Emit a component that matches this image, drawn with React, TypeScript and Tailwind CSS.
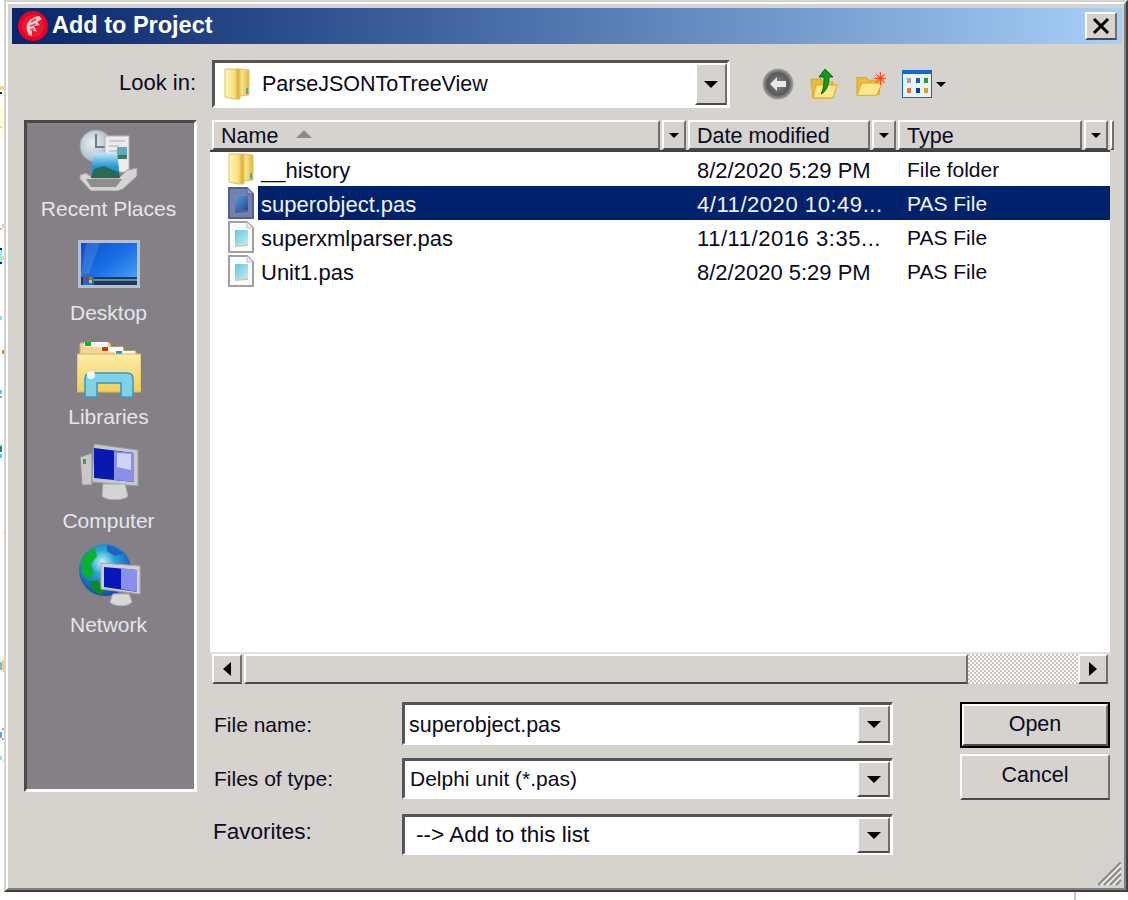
const raised = "border-2 border-t-white border-l-white border-r-[#707070] border-b-[#4a4a4a]";

const Arrow = ({ dir = "down" }: { dir?: "down" | "left" | "right" }) => {
  if (dir === "left")
    return (
      <svg width="8" height="14" viewBox="0 0 8 14">
        <polygon points="8,0 8,14 0,7" fill="#000" />
      </svg>
    );
  if (dir === "right")
    return (
      <svg width="8" height="14" viewBox="0 0 8 14">
        <polygon points="0,0 0,14 8,7" fill="#000" />
      </svg>
    );
  return (
    <svg width="14" height="7" viewBox="0 0 14 7">
      <polygon points="0,0 14,0 7,7" fill="#000" />
    </svg>
  );
};

const FolderTall = () => (
  <svg width="26" height="32" viewBox="0 0 26 32">
    <defs>
      <linearGradient id="ft" x1="0" y1="0" x2="1" y2="0">
        <stop offset="0" stopColor="#fff6b8" />
        <stop offset="0.4" stopColor="#f6de78" />
        <stop offset="0.55" stopColor="#d8ae3c" />
        <stop offset="0.7" stopColor="#f8e488" />
        <stop offset="1" stopColor="#e0b83e" />
      </linearGradient>
    </defs>
    <path d="M1 1h16l8 1v25l-9 1v3l-6 0-9-2z" fill="url(#ft)" stroke="#e0c060" strokeWidth="1" />
    <rect x="22" y="20" width="2" height="6" fill="#3aa8d8" />
  </svg>
);

const SmallFile = ({ selected }: { selected?: boolean }) => (
  <svg width="26" height="32" viewBox="0 0 26 32">
    <defs>
      <linearGradient id="fb" x1="0" y1="0" x2="1" y2="1">
        <stop offset="0" stopColor="#60c8e0" />
        <stop offset="1" stopColor="#c4eef2" />
      </linearGradient>
      <linearGradient id="fs" x1="0" y1="0" x2="1" y2="1">
        <stop offset="0" stopColor="#5a9ad0" />
        <stop offset="1" stopColor="#1a4c94" />
      </linearGradient>
    </defs>
    <path
      d="M1 1h18l6 6v24H1z"
      fill={selected ? "#7480b0" : "#fbfbfb"}
      stroke={selected ? "#525e96" : "#a0a0a0"}
      strokeWidth="2"
    />
    <path d="M19 1v6h6" fill={selected ? "#98a4cc" : "#eeeeee"} stroke={selected ? "#525e96" : "#c0c0c0"} />
    <path d="M7 9h13v14l-13 1z" fill={selected ? "url(#fs)" : "url(#fb)"} />
    <path d="M7 24l13-1v2l-13 1z" fill={selected ? "#525e96" : "#cfc8b4"} />
  </svg>
);

const AppLogo = () => (
  <svg width="30" height="30" viewBox="0 0 30 30">
    <circle cx="15" cy="15" r="15" fill="#ea0027" />
    <circle cx="15" cy="15" r="11" fill="#f0182e" />
    <path d="M21 5c-6 1-10 4-12 8-1 4 0 7 2 11l3 1 0-6 5 2-3-6 6-1-3-3 5-3z" fill="#f9c8c8" />
    <path d="M13 11l5-3M12 15l6-2M12 19l4-1" stroke="#e04060" strokeWidth="1.5" />
  </svg>
);

const BackIcon = () => (
  <svg width="32" height="32" viewBox="0 0 32 32">
    <defs>
      <radialGradient id="bk" cx="0.5" cy="0.5" r="0.5">
        <stop offset="0" stopColor="#8a8a8a" />
        <stop offset="0.7" stopColor="#585858" />
        <stop offset="1" stopColor="#a8a8a8" />
      </radialGradient>
    </defs>
    <circle cx="16" cy="16" r="15.5" fill="url(#bk)" />
    <path d="M8 16l7-7v4h9v6h-9v4z" fill="#e8e8e8" />
  </svg>
);

const UpIcon = () => (
  <svg width="28" height="32" viewBox="0 0 28 32">
    <path d="M1 11h10l2 3h10v16H3z" fill="#e9bd3a" stroke="#d9a520" />
    <path d="M3 30l3-13h21l-4 13z" fill="#fbe88a" stroke="#d9a520" />
    <path d="M15 1l8 8h-4c0 8-3 15-8 17 3-5 3-11 3-17h-5z" fill="#109a1e" stroke="#056a10" strokeWidth="1" />
  </svg>
);

const NewFolderIcon = () => (
  <svg width="30" height="26" viewBox="0 0 32 26">
    <path d="M1 6h10l2 3h12v15H1z" fill="#e9bd3a" stroke="#d9a520" />
    <path d="M1 25l5-13h22l-6 13z" fill="#fbe88a" stroke="#d9a520" />
    <circle cx="26" cy="7" r="4" fill="#f2a13a" />
    <path d="M26 0v14M19 7h13M21 2l10 10M31 2L21 12" stroke="#e8401c" strokeWidth="1" />
  </svg>
);

const ViewsIcon = () => (
  <svg width="30" height="28" viewBox="0 0 30 28">
    <rect x="0.5" y="0.5" width="29" height="27" fill="#eaf3fb" stroke="#1268cc" />
    <rect x="0" y="0" width="30" height="4" fill="#1268cc" />
    <rect x="5" y="8" width="4" height="5" fill="#a09cc8" />
    <rect x="14" y="8" width="4" height="5" fill="#2a58c0" />
    <rect x="22" y="8" width="4" height="5" fill="#2a9a40" />
    <rect x="5" y="18" width="4" height="5" fill="#f07040" />
    <rect x="14" y="18" width="4" height="5" fill="#1a3a9a" />
    <rect x="22" y="18" width="4" height="5" fill="#d8a020" />
  </svg>
);

const RecentIcon = () => (
  <svg width="60" height="62" viewBox="0 0 60 62">
    <defs>
      <radialGradient id="ck" cx="0.4" cy="0.4" r="0.6">
        <stop offset="0" stopColor="#e8f0f4" />
        <stop offset="1" stopColor="#a8b8c4" />
      </radialGradient>
      <linearGradient id="ph" x1="0" y1="0" x2="0" y2="1">
        <stop offset="0" stopColor="#c8eefa" />
        <stop offset="0.55" stopColor="#2898d8" />
        <stop offset="1" stopColor="#1a8ac8" />
      </linearGradient>
    </defs>
    <circle cx="17" cy="17" r="16" fill="url(#ck)" stroke="#9aa8b4" />
    <path d="M17 5v13h9" stroke="#6c7a88" strokeWidth="2" fill="none" />
    <rect x="26" y="7" width="24" height="36" fill="#ececec" stroke="#b4b4b4" />
    <path d="M30 12h16M30 17h10M30 22h8" stroke="#a8a8a8" />
    <rect x="38" y="18" width="10" height="12" fill="#60a8c0" />
    <rect x="38" y="26" width="10" height="4" fill="#3a7a5a" />
    <path d="M1 46l6-2 7 5h26l8-8 10-2v8L44 60l-6 2H12L1 50z" fill="#d4d4d4" stroke="#9c9c9c" />
    <path d="M7 50h36l-6 8H12z" fill="#8e8e8e" />
    <path d="M14 24l24-1 3 26H12z" fill="url(#ph)" />
    <path d="M12 49l3-9 10-3 14 6 2 6z" fill="#2a6a52" />
  </svg>
);

const DesktopIcon = () => (
  <svg width="62" height="48" viewBox="0 0 62 48">
    <defs>
      <linearGradient id="dk" x1="0" y1="0" x2="1" y2="1">
        <stop offset="0" stopColor="#0b50c8" />
        <stop offset="0.5" stopColor="#1a70e8" />
        <stop offset="1" stopColor="#58a8f4" />
      </linearGradient>
    </defs>
    <rect x="0" y="0" width="62" height="48" fill="#b8c0d8" />
    <rect x="3" y="3" width="56" height="42" fill="url(#dk)" />
    <path d="M8 3h14L10 36H3z" fill="#ffffff" opacity="0.12" />
    <rect x="3" y="37" width="56" height="8" fill="#1e3a54" />
    <rect x="14" y="39" width="45" height="2" fill="#6c8aa4" />
    <rect x="5" y="34" width="11" height="11" fill="#2e6cb0" />
    <rect x="8" y="37" width="3" height="3" fill="#e02020" />
    <rect x="11" y="37" width="3" height="3" fill="#30b030" />
    <rect x="8" y="40" width="3" height="3" fill="#2060e0" />
    <rect x="11" y="40" width="3" height="3" fill="#e8c020" />
  </svg>
);

const LibrariesIcon = () => (
  <svg width="64" height="58" viewBox="0 0 64 58">
    <defs>
      <linearGradient id="lb" x1="0" y1="0" x2="0" y2="1">
        <stop offset="0" stopColor="#fdeca8" />
        <stop offset="1" stopColor="#f4cf58" />
      </linearGradient>
    </defs>
    <path d="M3 4h30l1 4h12l1 4h12v10H3z" fill="#f2d890" stroke="#d4b060" />
    <rect x="7" y="3" width="24" height="5" fill="#fafafa" />
    <rect x="8" y="3" width="6" height="4" fill="#18b818" />
    <rect x="24" y="8" width="22" height="5" fill="#fafafa" />
    <rect x="25" y="8" width="6" height="4" fill="#e03010" />
    <rect x="38" y="12" width="20" height="5" fill="#fafafa" />
    <rect x="39" y="12" width="6" height="4" fill="#1898e8" />
    <path d="M0 15h64v38H0z" fill="url(#lb)" stroke="#d8b458" />
    <path d="M8 58V40q0-6 6-6h36q6 0 6 6v18H44V44H20v14z" fill="#82d0ea" stroke="#2c9ac4" strokeWidth="1.5" />
    <circle cx="14" cy="36" r="4" fill="#f0fcff" />
  </svg>
);

const ComputerIcon = () => (
  <svg width="60" height="58" viewBox="0 0 60 58">
    <path d="M1 14l12-4v32l-10 0z" fill="#c8c8c8" stroke="#8c8c8c" />
    <rect x="4" y="16" width="3" height="5" fill="#30b030" />
    <path d="M15 1l44 6v36l-46-4z" fill="#c8c8cc" stroke="#9a9a9a" />
    <path d="M15 5l40 5v29L15 35z" fill="#0818b0" />
    <path d="M35 8l20 2v29l-20-2z" fill="#8890e8" />
    <path d="M38 10l14 1v16l-14-3z" fill="#d0d4fa" />
    <path d="M24 41h22l3 12c-4 5-22 5-26 0z" fill="#d4d4d4" stroke="#aaa" />
  </svg>
);

const NetworkIcon = () => (
  <svg width="64" height="64" viewBox="0 0 64 64">
    <defs>
      <radialGradient id="nt" cx="0.45" cy="0.35" r="0.65">
        <stop offset="0" stopColor="#c8f4f8" />
        <stop offset="0.35" stopColor="#28a8d8" />
        <stop offset="1" stopColor="#1448b0" />
      </radialGradient>
    </defs>
    <circle cx="28" cy="26" r="26" fill="url(#nt)" />
    <path d="M4 18c3-8 8-12 14-14l2 8-6 8 3 10-6 6-7-8z" fill="#0ab030" />
    <path d="M12 38l8-2 8 10-4 5c-6-2-10-7-12-13z" fill="#0a8a28" />
    <path d="M30 1c6 1 12 4 16 9l-8 2-8-5z" fill="#2060c8" />
    <path d="M24 19l39 3v28l-39-5z" fill="#d0d0d4" stroke="#a8a8a8" />
    <path d="M27 23l33 3v22l-33-5z" fill="#0818b8" />
    <path d="M44 24l16 2v22l-16-3z" fill="#8890e8" />
    <path d="M36 50h16l3 8c-4 5-18 5-22 0z" fill="#d8d8d8" stroke="#b0b0b0" />
  </svg>
);

const ResizeGrip = () => (
  <svg width="24" height="24" viewBox="0 0 24 24">
    <path d="M0 23L23 0M6 23L23 6M12 23L23 12M18 23l5-5" stroke="#8c8c8c" strokeWidth="2" />
    <path d="M3 23L23 3M9 23L23 9M15 23l8-8" stroke="#ffffff" strokeWidth="1" />
  </svg>
);

const SideItem = ({ icon, label }: { icon: React.ReactNode; label: string }) => (
  <div className="flex flex-col items-center h-[104px]">
    <div className="h-[70px] flex items-center justify-center">{icon}</div>
    <div className="mt-[2px] h-[24px] leading-[24px] text-[21px] text-[#e4e6ee] whitespace-nowrap">{label}</div>
  </div>
);

const HeaderCell = ({ label, w, sort }: { label: string; w: string; sort?: boolean }) => (
  <div className="flex h-full">
    <div className={`${w} ${raised} h-full flex items-center pl-[7px] pt-[3px] text-[21.5px] leading-none`}>
      {label}
      {sort && (
        <svg className="ml-[18px] mb-[6px]" width="16" height="8" viewBox="0 0 16 8">
          <polygon points="0,8 16,8 8,0" fill="#8c8c8c" />
        </svg>
      )}
    </div>
    <div className={`w-[24px] ml-[2px] mr-[2px] h-full ${raised} flex items-center justify-center`}>
      <svg width="10" height="5" viewBox="0 0 10 5">
        <polygon points="0,0 10,0 5,5" fill="#000" />
      </svg>
    </div>
  </div>
);

const FileRow = ({
  icon,
  name,
  date,
  type,
  selected,
  cut,
}: {
  icon: React.ReactNode;
  name: string;
  date: string;
  type: string;
  selected?: boolean;
  cut?: boolean;
}) => (
  <div className="flex h-[34px] items-center text-[22px]">
    <div className="w-[48px] pl-[18px] flex items-center">{icon}</div>
    <div className={`flex flex-1 h-full items-center pt-[2px] ${selected ? "bg-[#00226c] text-[#f2f2f8]" : ""}`}>
      <div className="w-[439px] pl-[3px] whitespace-nowrap">{name}</div>
      <div className={`w-[210px] whitespace-nowrap ${cut ? "tracking-[0.55px]" : ""}`}>{date}</div>
      <div className="text-[21px]">{type}</div>
    </div>
  </div>
);

const Combo = ({ text, h, pad }: { text: string; h: string; pad: string }) => (
  <div className={`w-[491px] ${h} flex border-t-[3px] border-l-[3px] border-t-[#555555] border-l-[#555555] border-b-2 border-r-2 border-b-white border-r-white bg-white`}>
    <div className={`flex-1 flex items-center ${pad} whitespace-nowrap`}>{text}</div>
    <div className={`w-[33px] mr-[1px] ${raised} bg-[#d6d2ce] flex items-center justify-center`}>
      <Arrow />
    </div>
  </div>
);

export default function App() {
  return (
    <div className="relative w-[1128px] h-[900px] bg-white pl-[4px] font-['Liberation_Sans',sans-serif] text-[#0a0a20]">
      {/* bits of the window behind, showing past the dialog's edge */}
      <div className="absolute left-0 top-[86px] w-[4px] h-[4px] bg-[#f5d590]" />
      <div className="absolute left-0 top-[92px] w-[2px] h-[2px] bg-[#0a246a]" />
      <div className="absolute left-0 top-[104px] w-[4px] h-[34px] bg-[#fffde0]" />
      <div className="absolute left-0 top-[126px] w-[2px] h-[2px] bg-[#b0f0d0]" />
      <div className="absolute left-[2px] top-[224px] w-[2px] h-[4px] bg-[#f5c8b0]" />
      <div className="absolute left-0 top-[228px] w-[2px] h-[2px] bg-[#80d8f0]" />
      <div className="absolute left-0 top-[248px] w-[2px] h-[2px] bg-[#0a246a]" />
      <div className="absolute left-0 top-[250px] w-[2px] h-[12px] bg-[#80f8f8]" />
      <div className="absolute left-[2px] top-[256px] w-[2px] h-[4px] bg-[#f8d880]" />
      <div className="absolute left-0 top-[262px] w-[2px] h-[2px] bg-[#0a246a]" />
      <div className="absolute left-0 top-[316px] w-[2px] h-[4px] bg-[#80e0f8]" />
      <div className="absolute left-[2px] top-[350px] w-[2px] h-[4px] bg-[#e08a20]" />
      <div className="absolute left-0 top-[390px] w-[2px] h-[4px] bg-[#60c0f8]" />
      <div className="absolute left-0 top-[396px] w-[2px] h-[2px] bg-[#60b0f0]" />
      <div className="absolute left-0 top-[444px] w-[2px] h-[2px] bg-[#a0f0e0]" />
      <div className="absolute left-0 top-[446px] w-[2px] h-[6px] bg-[#109080]" />
      <div className="absolute left-0 top-[454px] w-[2px] h-[4px] bg-[#20e0f8]" />
      <div className="absolute left-[2px] top-[532px] w-[2px] h-[2px] bg-[#fff8a0]" />
      <div className="absolute left-[2px] top-[660px] w-[2px] h-[12px] bg-[#f8d070]" />
      <div className="absolute left-0 top-[662px] w-[2px] h-[8px] bg-[#60c0f0]" />
      <div className="absolute left-[2px] top-[728px] w-[2px] h-[2px] bg-[#e090a0]" />
      <div className="absolute left-0 top-[732px] w-[2px] h-[6px] bg-[#40b0f8]" />
      <div className="absolute left-[2px] top-[738px] w-[2px] h-[2px] bg-[#e090a0]" />
      <div className="absolute left-0 top-[756px] w-[2px] h-[4px] bg-[#80e8f8]" />
      <div className="absolute left-[2px] top-[760px] w-[2px] h-[2px] bg-[#fff090]" />
      <div className="absolute left-[1074px] top-[892px] w-[2px] h-[8px] bg-[#c4c4c4]" />

      <div className="w-[1124px] h-[892px] border-2 border-t-[#d6d2ce] border-l-[#d6d2ce] border-r-[#404040] border-b-[#404040]">
        <div className="relative h-full border-2 border-t-white border-l-white border-r-[#808080] border-b-[#808080] bg-[#d6d2ce] pt-[4px] pl-[4px] pr-[2px]">
          <div className="h-[36px] flex items-center pl-[6px] pr-[5px] bg-gradient-to-r from-[#0a246a] to-[#a8d0f8]">
            <AppLogo />
            <div className="ml-[4px] flex-1 text-white font-bold text-[23.5px]">Add to Project</div>
            <div className={`w-[32px] h-[28px] ${raised} bg-[#d6d2ce] flex items-center justify-center`}>
              <svg width="18" height="16" viewBox="0 0 18 16">
                <path d="M2 1l14 14M16 1L2 15" stroke="#000" strokeWidth="3" />
              </svg>
            </div>
          </div>

          <div className="mt-[16px] h-[48px] flex">
            <div className="w-[184px] text-right text-[22px] leading-[46px]">Look in:</div>
            <div className="ml-[16px] w-[518px] h-[48px] flex border-t-[3px] border-l-[3px] border-t-[#555555] border-l-[#555555] border-b-[3px] border-r-[3px] border-b-white border-r-white bg-white">
              <div className="flex-1 flex items-center pl-[9px] text-[21.5px]">
                <FolderTall />
                <span className="ml-[12px]">ParseJSONToTreeView</span>
              </div>
              <div className={`w-[32px] ${raised} bg-[#d6d2ce] flex items-center justify-center`}>
                <Arrow />
              </div>
            </div>
            <div className="ml-[32px] flex items-center">
              <BackIcon />
              <div className="ml-[16px]"><UpIcon /></div>
              <div className="ml-[18px]"><NewFolderIcon /></div>
              <div className="ml-[16px] flex items-center gap-[4px]">
                <ViewsIcon />
                <svg width="10" height="5" viewBox="0 0 10 5">
                  <polygon points="0,0 10,0 5,5" fill="#000" />
                </svg>
              </div>
            </div>
          </div>

          <div className="mt-[12px] flex">
            <div className="ml-[12px] w-[173px] h-[672px] border-t-[3px] border-l-[3px] border-t-[#4a4a4a] border-l-[#4a4a4a] border-b-[3px] border-r-[3px] border-b-white border-r-white bg-[#848085] pt-[2px] pr-[4px]">
              <SideItem icon={<RecentIcon />} label="Recent Places" />
              <SideItem icon={<DesktopIcon />} label="Desktop" />
              <SideItem icon={<LibrariesIcon />} label="Libraries" />
              <SideItem icon={<ComputerIcon />} label="Computer" />
              <SideItem icon={<NetworkIcon />} label="Network" />
            </div>

            <div className="ml-[13px] w-[900px]">
              <div className="h-[564px] flex flex-col bg-white">
                <div className="h-[32px] flex bg-[#d6d2ce] border-b-2 border-b-[#404040] pl-[2px]">
                  <HeaderCell label="Name" w="w-[448px]" sort />
                  <HeaderCell label="Date modified" w="w-[182px]" />
                  <HeaderCell label="Type" w="w-[184px]" />
                  <div className={`flex-1 ${raised}`} />
                </div>
                <div className="flex-1">
                  <FileRow icon={<FolderTall />} name="__history" date="8/2/2020 5:29 PM" type="File folder" />
                  <FileRow icon={<SmallFile selected />} name="superobject.pas" date="4/11/2020 10:49..." type="PAS File" selected cut />
                  <FileRow icon={<SmallFile />} name="superxmlparser.pas" date="11/11/2016 3:35..." type="PAS File" cut />
                  <FileRow icon={<SmallFile />} name="Unit1.pas" date="8/2/2020 5:29 PM" type="PAS File" />
                </div>
                <div className="h-[32px] flex bg-[#d6d2ce] border-t-2 border-t-[#e4e0dc]">
                  <div className={`w-[30px] ${raised} flex items-center justify-center ml-[2px]`}>
                    <Arrow dir="left" />
                  </div>
                  <div className={`w-[724px] ${raised} ml-[2px]`} />
                  <div className="flex-1 bg-[repeating-conic-gradient(#ffffff_0_25%,#c8c4c0_0_50%)] bg-[length:4px_4px]" />
                  <div className={`w-[30px] ${raised} flex items-center justify-center mr-[2px]`}>
                    <Arrow dir="right" />
                  </div>
                </div>
              </div>

              <div className="mt-[18px] flex">
                <div className="flex flex-col">
                  <div className="flex items-center">
                    <div className="w-[192px] pl-[4px] pt-[3px] text-[21px]">File name:</div>
                    <div className="text-[21.5px]">
                      <Combo text="superobject.pas" h="h-[43px]" pad="pl-[4px] pt-[2px]" />
                    </div>
                  </div>
                  <div className="mt-[13px] flex items-center">
                    <div className="w-[192px] pl-[4px] text-[21px]">Files of type:</div>
                    <div className="text-[21px]">
                      <Combo text="Delphi unit (*.pas)" h="h-[41px]" pad="pl-[5px]" />
                    </div>
                  </div>
                  <div className="mt-[15px] flex items-center">
                    <div className="w-[192px] pl-[3px] pb-[6px] text-[22.5px]">Favorites:</div>
                    <div className="text-[22.5px]">
                      <Combo text="--> Add to this list" h="h-[41px]" pad="pl-[11px]" />
                    </div>
                  </div>
                </div>
                <div className="ml-[67px] flex flex-col gap-[6px]">
                  <div className="w-[150px] h-[46px] border-2 border-black">
                    <div className={`h-full ${raised} flex items-center justify-center pb-[2px] text-[21.5px]`}>Open</div>
                  </div>
                  <div className={`w-[150px] h-[46px] ${raised} flex items-center justify-center pb-[3px] text-[21.5px]`}>Cancel</div>
                </div>
              </div>
            </div>
          </div>

          <div className="absolute right-[2px] bottom-[2px]">
            <ResizeGrip />
          </div>
        </div>
      </div>
    </div>
  );
}
